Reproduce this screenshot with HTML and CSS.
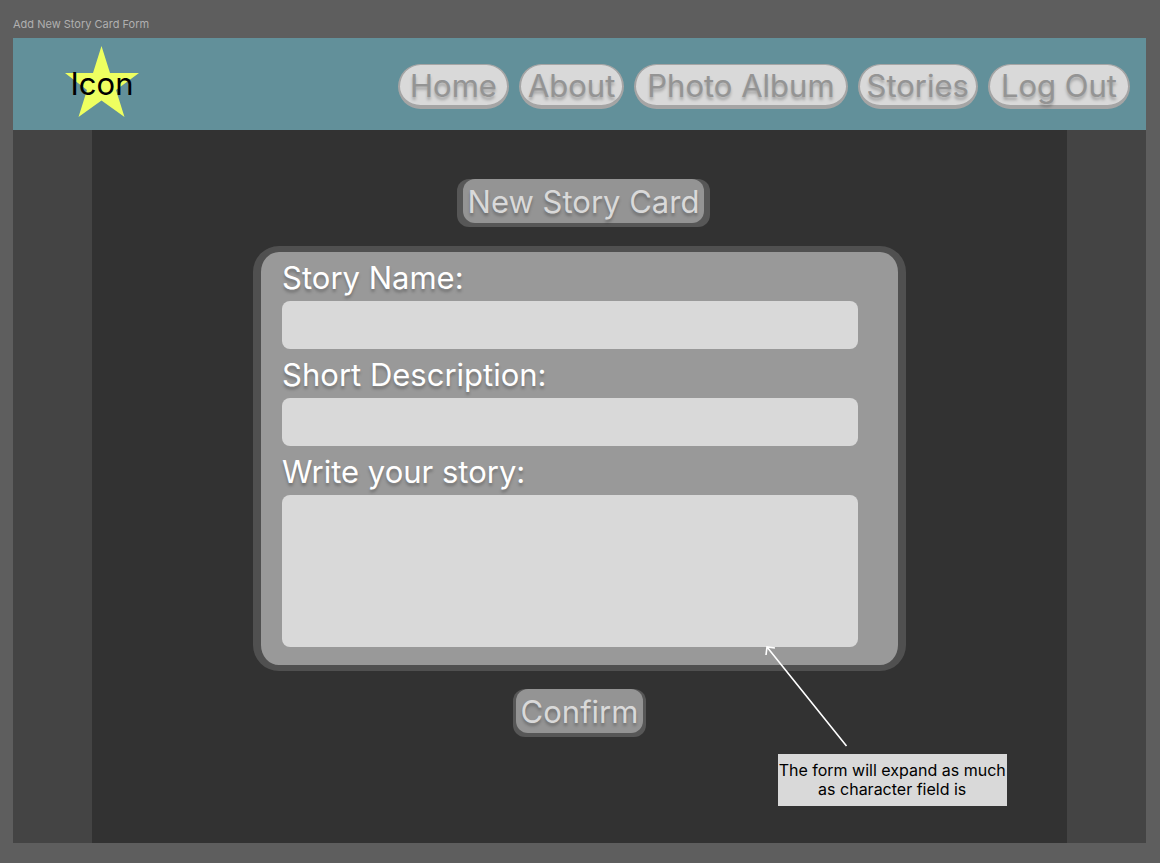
FILE: index.html
```html
<!DOCTYPE html>
<html lang="en">
<head>
<meta charset="utf-8">
<meta name="viewport" content="width=device-width, initial-scale=1">
<title>Add New Story Card Form</title>
<link rel="stylesheet" href="styles.css">
</head>
<body>
<p class="frame-label">Add New Story Card Form</p>
<div class="frame">
  <header class="site-header">
    <a class="logo" href="#">
      <svg class="logo-star" viewBox="0 0 74 71" aria-hidden="true"><path fill="#eeff60" d="M36.500 0 45 27H74L51 44 59.500 71 36.500 54.600 13.500 71 22 44 0 27H28Z"/></svg>
      <span class="logo-text">Icon</span>
    </a>
    <nav class="nav">
      <a class="nav-link nav-snug" href="#">Home</a>
      <a class="nav-link nav-tight" href="#">About</a>
      <a class="nav-link" href="#">Photo Album</a>
      <a class="nav-link nav-tight" href="#">Stories</a>
      <a class="nav-link" href="#">Log Out</a>
    </nav>
  </header>
  <main class="page">
    <h1 class="badge badge-title"><span class="badge-face">New Story Card</span></h1>
    <form class="story-form">
      <div class="card">
        <label class="field-label" for="name">Story Name:</label>
        <input class="field" id="name" type="text">
        <label class="field-label" for="description">Short Description:</label>
        <input class="field" id="description" type="text">
        <label class="field-label" for="story">Write your story:</label>
        <textarea class="field field-story" id="story"></textarea>
      </div>
      <button class="badge badge-confirm" type="submit"><span class="badge-face">Confirm</span></button>
    </form>
    <aside class="note">
      <svg class="note-arrow" viewBox="0 0 84 104" aria-hidden="true"><path fill="none" stroke="#fff" stroke-width="1.600" d="M82.500 103 3 4M2 12 3 4 11 5"/></svg>
      The form will expand as much as character field is
    </aside>
  </main>
</div>
</body>
</html>
```
FILE: styles.css
```css
* { box-sizing: border-box; }

body {
  margin: 0;
  min-height: 100vh;
  padding: 16px 14px 20px 13px;
  display: flex;
  flex-direction: column;
  background: #5e5e5e;
  font-family: Inter, "Liberation Sans", sans-serif;
}

.frame-label {
  margin: 0 0 6px;
  font-size: 11px;
  line-height: 16px;
  color: #b0b0b0;
}

.frame {
  flex: 1;
  display: flex;
  flex-direction: column;
  background: #444;
}

.site-header {
  display: flex;
  align-items: center;
  justify-content: space-between;
  padding: 8px 16px 13px 52px;
  background: #62909a;
}

.logo {
  display: grid;
  place-items: center;
  color: #000;
  text-decoration: none;
}

.logo-star,
.logo-text { grid-area: 1 / 1; }

.logo-star { width: 74px; }

.logo-text {
  padding-top: 4px;
  font-size: 31px;
  line-height: 40px;
}

.nav {
  display: flex;
  gap: 10px;
  padding-top: 10px;
}

.nav-link {
  padding: 2px 11px 0;
  border: solid #a5a5a5;
  border-width: 1px 2px 4px;
  border-radius: 24px;
  background: #d9d9d9;
  color: #949494;
  font-size: 31px;
  line-height: 38px;
  text-decoration: none;
  text-shadow: 0 3px 3px rgba(0, 0, 0, 0.25);
}

.nav-snug { padding: 2px 10px 0; }
.nav-tight { padding: 2px 7px 0; }

.page {
  position: relative;
  flex: 1;
  display: flex;
  flex-direction: column;
  align-items: center;
  margin: 0 7%;
  padding: 49px 0 106px;
  background: #323232;
}

.badge {
  margin: 0;
  padding: 0 3px 4px;
  border: 0;
  border-radius: 12px;
  background: #575757;
  color: #d9d9d9;
  font-family: inherit;
  font-size: 31px;
  font-weight: 400;
  line-height: 42px;
  text-shadow: 0 3px 3px rgba(0, 0, 0, 0.25);
}

.badge-face {
  display: block;
  padding: 2px 5px 0;
  border-radius: 12px;
  background: #949494;
}

.badge-title {
  margin-left: 8px;
  padding: 0 6px 4px;
}

.story-form {
  width: 67%;
  margin-top: 19px;
  display: flex;
  flex-direction: column;
  align-items: center;
  gap: 18px;
}

.card {
  width: 100%;
  display: flex;
  flex-direction: column;
  padding: 7px 40px 18px 21px;
  border: solid #505050;
  border-width: 6px 8px;
  border-radius: 26px;
  background: #999;
}

.field-label {
  margin-bottom: 4px;
  color: #fff;
  font-size: 31px;
  line-height: 38px;
  text-shadow: 0 3px 3px rgba(0, 0, 0, 0.25);
}

.field {
  width: 100%;
  height: 48px;
  margin: 0 0 7px;
  padding: 4px 12px;
  border: 0;
  border-radius: 8px;
  background: #d9d9d9;
  font: 24px Inter, "Liberation Sans", sans-serif;
}

.field-story {
  height: 152px;
  margin: 0;
  resize: none;
}

/* Annotation pinned over the page, pointing at the story field */
.note {
  position: absolute;
  top: 624px;
  right: 60px;
  width: 229px;
  padding: 7px 0;
  background: #d9d9d9;
  color: #000;
  font-size: 16px;
  line-height: 19px;
  text-align: center;
}

.note-arrow {
  position: absolute;
  left: -14px;
  bottom: 59px;
  width: 84px;
}
```
